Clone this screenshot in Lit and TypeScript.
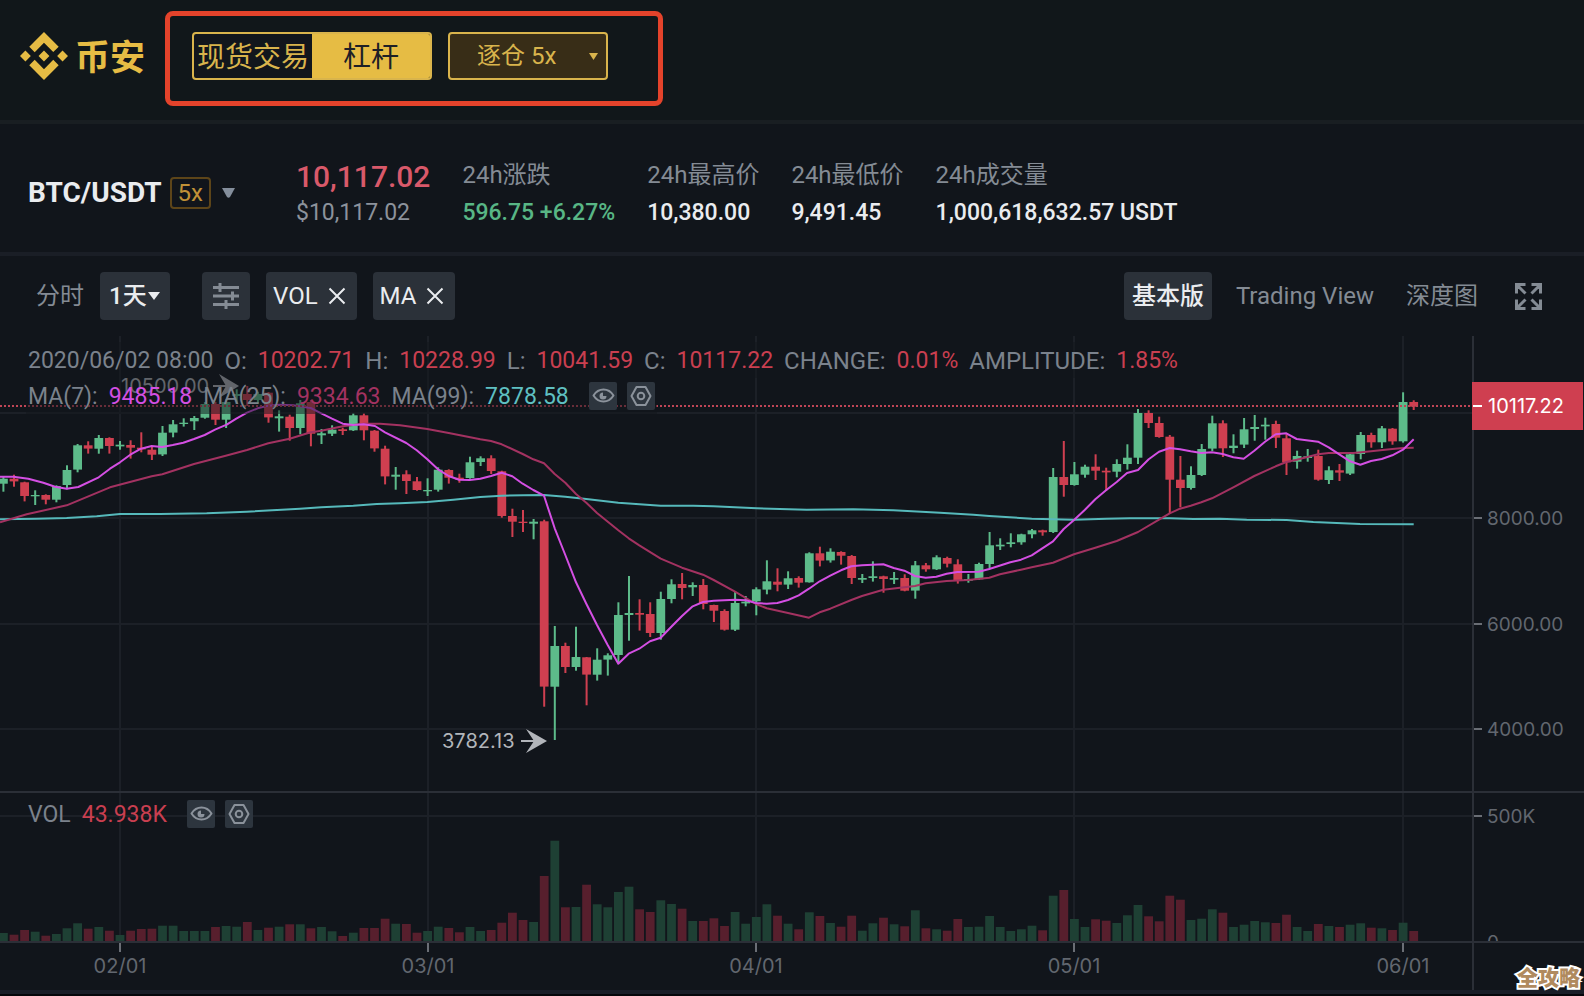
import { LitElement, html, svg, css } from "lit";
import { customElement, property, state } from "lit/decorators.js";
import { classMap } from "lit/directives/class-map.js";

type Candle = [string, number, number, number, number, number];

// Daily candles, 2020-01-21 to 2020-06-02: direction, high, body top,
// body bottom, low and volume, in thirds of a chart unit.
const CANDLES: Candle[] = [
  ["g", 290, 296, 311, 335, 27], ["r", 284, 296, 304, 320, 22], ["r", 305, 307, 348, 364, 36], ["g", 331, 345, 349, 375, 31],
  ["r", 343, 345, 359, 373, 19], ["g", 316, 318, 359, 367, 24], ["g", 256, 270, 315, 328, 41], ["g", 192, 196, 269, 277, 56],
  ["r", 184, 196, 206, 221, 40], ["g", 165, 174, 206, 221, 45], ["r", 172, 174, 198, 221, 34], ["g", 183, 194, 199, 209, 21],
  ["r", 181, 195, 203, 236, 34], ["r", 157, 203, 208, 217, 39], ["r", 201, 209, 224, 240, 40], ["g", 138, 158, 223, 228, 49],
  ["g", 120, 133, 158, 172, 49], ["g", 115, 128, 132, 140, 33], ["g", 108, 114, 124, 150, 33], ["g", 66, 72, 113, 116, 33],
  ["r", 66, 72, 119, 135, 45], ["g", 58, 66, 119, 144, 48], ["g", 28, 42, 48, 72, 46], ["r", 18, 42, 60, 78, 60],
  ["g", 35, 42, 60, 70, 36], ["r", 36, 38, 112, 128, 43], ["g", 91, 109, 115, 155, 46], ["r", 104, 110, 144, 182, 53],
  ["g", 60, 70, 144, 163, 53], ["r", 60, 66, 161, 199, 41], ["g", 147, 160, 166, 192, 45], ["g", 136, 149, 161, 168, 32],
  ["r", 143, 148, 153, 165, 18], ["g", 100, 106, 151, 153, 28], ["r", 100, 106, 151, 181, 42], ["r", 150, 152, 205, 215, 42],
  ["r", 197, 206, 289, 313, 70], ["g", 261, 284, 290, 329, 55], ["r", 271, 283, 303, 342, 54], ["r", 291, 304, 330, 332, 28],
  ["g", 295, 330, 334, 348, 33], ["g", 262, 269, 329, 335, 46], ["r", 268, 270, 293, 311, 42], ["r", 281, 293, 298, 308, 29],
  ["g", 230, 247, 294, 296, 45], ["g", 229, 235, 246, 258, 33], ["r", 226, 235, 273, 282, 36], ["r", 272, 274, 408, 413, 58],
  ["r", 386, 408, 425, 471, 88], ["r", 390, 425, 429, 456, 66], ["g", 417, 425, 431, 478, 60], ["r", 419, 424, 920, 980, 198],
  ["g", 738, 798, 920, 1080, 304], ["r", 788, 798, 861, 879, 104], ["g", 740, 831, 861, 872, 105], ["r", 831, 832, 884, 976, 172],
  ["g", 805, 839, 884, 902, 113], ["g", 820, 826, 839, 887, 104], ["g", 667, 705, 825, 850, 150], ["g", 588, 699, 705, 782, 166],
  ["r", 658, 699, 704, 752, 98], ["r", 667, 702, 759, 771, 90], ["g", 635, 657, 759, 779, 125], ["g", 598, 613, 657, 670, 114],
  ["r", 579, 612, 624, 658, 100], ["g", 607, 615, 622, 648, 63], ["r", 597, 615, 672, 688, 63], ["r", 674, 675, 692, 726, 71],
  ["r", 688, 693, 749, 752, 48], ["g", 635, 669, 749, 753, 90], ["g", 648, 665, 670, 679, 55], ["g", 622, 628, 664, 706, 75],
  ["g", 541, 604, 629, 643, 113], ["r", 565, 605, 614, 634, 79], ["g", 574, 595, 614, 627, 55], ["r", 589, 594, 608, 623, 38],
  ["g", 517, 520, 607, 608, 89], ["r", 500, 520, 542, 559, 78], ["g", 505, 515, 541, 548, 57], ["r", 514, 516, 527, 554, 46],
  ["r", 525, 528, 594, 612, 79], ["g", 582, 594, 599, 609, 34], ["g", 544, 589, 594, 605, 56], ["r", 587, 589, 597, 638, 73],
  ["g", 576, 594, 599, 612, 53], ["r", 583, 594, 632, 634, 47], ["g", 543, 556, 632, 656, 95], ["r", 549, 556, 568, 575, 41],
  ["g", 526, 532, 568, 570, 38], ["r", 530, 534, 551, 562, 34], ["r", 538, 553, 602, 611, 69], ["g", 582, 597, 602, 608, 45],
  ["g", 548, 552, 598, 600, 46], ["g", 456, 496, 552, 567, 78], ["g", 475, 494, 499, 510, 45], ["g", 460, 487, 492, 502, 33],
  ["g", 461, 463, 487, 494, 38], ["g", 447, 451, 463, 475, 49], ["r", 449, 451, 457, 467, 35], ["g", 264, 291, 456, 459, 139],
  ["r", 183, 291, 315, 350, 156], ["g", 246, 283, 315, 317, 69], ["g", 254, 260, 284, 293, 45], ["r", 223, 260, 272, 300, 68],
  ["r", 263, 272, 277, 333, 64], ["g", 238, 252, 275, 292, 57], ["g", 193, 233, 252, 269, 80], ["g", 87, 99, 233, 252, 111],
  ["r", 91, 99, 129, 144, 77], ["r", 110, 129, 171, 173, 62], ["r", 165, 170, 299, 400, 139], ["r", 228, 299, 324, 382, 127],
  ["g", 259, 285, 324, 329, 66], ["g", 192, 207, 285, 288, 70], ["g", 107, 130, 206, 213, 98], ["r", 121, 130, 205, 231, 88],
  ["g", 163, 197, 204, 220, 45], ["g", 114, 148, 194, 204, 52], ["g", 105, 141, 147, 182, 63], ["g", 113, 134, 139, 179, 59],
  ["r", 122, 132, 173, 204, 57], ["r", 163, 175, 247, 285, 82], ["g", 212, 228, 245, 266, 45], ["g", 207, 229, 234, 245, 33],
  ["r", 209, 228, 299, 302, 54], ["g", 259, 271, 300, 312, 48], ["r", 252, 271, 278, 303, 45], ["g", 220, 223, 281, 285, 52],
  ["g", 156, 165, 222, 238, 56], ["r", 158, 165, 187, 203, 43], ["g", 138, 145, 187, 204, 41], ["r", 144, 146, 184, 194, 36],
  ["g", 37, 66, 184, 188, 58], ["r", 61, 66, 80, 90, 33],
];

// Moving averages, flat x,y lists in the same units as the candles.
const MA7 = [
  0,290,40,290,85,296,130,308,165,320,200,326,235,321,296,292,330,266,360,247,391,224,423,206,455,198,487,201,518,195,550,188,
  582,177,614,165,645,149,680,134,709,116,741,98,773,85,800,78,837,74,880,76,932,84,964,100,996,116,1028,131,1060,135,1091,133,
  1125,138,1155,157,1219,189,1250,211,1282,238,1314,268,1346,288,1377,299,1409,300,1441,296,1473,288,1505,278,1537,289,
  1568,311,1600,330,1632,347,1664,445,1696,525,1728,607,1759,671,1791,735,1823,795,1855,851,1886,821,1918,806,1950,784,
  1982,773,2014,740,2046,708,2078,679,2109,666,2141,662,2205,659,2237,661,2268,669,2300,671,2332,669,2364,660,2396,646,
  2427,626,2459,604,2491,587,2523,571,2554,559,2586,556,2650,553,2681,564,2713,572,2745,588,2777,593,2809,590,2840,581,
  2872,576,2936,575,2968,567,3031,547,3063,539,3095,526,3127,505,3159,484,3191,447,3222,420,3254,390,3286,358,3318,331,
  3350,306,3381,279,3414,270,3446,238,3477,215,3509,204,3540,208,3572,214,3604,219,3636,217,3668,222,3700,232,3731,236,
  3763,212,3795,185,3827,163,3859,160,3890,177,3954,185,3986,202,4018,223,4050,244,4081,254,4113,243,4145,237,4177,226,
  4209,209,4241,178,
];
const MA25 = [
  0,427,80,403,200,376,330,322,455,289,487,283,582,252,677,227,741,210,805,190,869,176,932,157,964,152,1028,139,1091,131,
  1140,131,1200,136,1282,147,1346,159,1441,178,1473,183,1505,193,1568,222,1600,238,1632,250,1664,282,1696,308,1728,342,
  1759,368,1791,399,1855,451,1886,475,1918,496,1982,536,2046,563,2109,584,2141,600,2205,635,2268,672,2300,685,2364,699,
  2427,713,2459,697,2491,686,2554,660,2586,648,2650,629,2713,622,2745,618,2777,610,2840,603,2904,600,2968,593,3000,583,
  3063,569,3095,562,3159,548,3222,523,3286,503,3350,483,3414,456,3477,419,3509,400,3540,386,3572,377,3604,367,3636,355,
  3700,322,3763,288,3827,259,3859,246,3890,239,3954,223,3986,219,4060,219,4113,214,4177,207,4209,204,4241,203,
];
const MA99 = [
  0,418,110,416,200,414,290,409,360,402,480,402,620,400,740,395,900,386,964,382,1060,377,1130,372,1200,370,1282,366,1360,359,
  1441,351,1505,347,1570,346,1632,345,1696,350,1759,357,1855,368,1982,377,2080,377,2140,379,2270,385,2420,389,2560,388,
  2680,391,2820,398,2920,404,2968,408,3095,416,3159,418,3222,419,3320,416,3390,415,3510,415,3580,417,3660,416,3740,419,
  3860,420,3940,426,4080,432,4241,433,
];

const STEP = 10.604;
const FIRST_X = 3.4;
const TOP = 44;
const BASE = 606;

const py = (v: number) => TOP + v / 3;
const path = (p: number[]) => {
  const pts: string[] = [];
  for (let i = 0; i < p.length; i += 2) pts.push(`${(p[i] / 3).toFixed(1)},${py(p[i + 1]).toFixed(1)}`);
  return pts.join(" ");
};

const eyeIcon = html`<svg viewBox="0 0 28 28" fill="none" stroke="#8b929b" stroke-width="2" aria-hidden="true">
  <path d="M4.500 13.500C9.500 5.500 19.500 5.500 24.500 13.500C19.500 21.500 9.500 21.500 4.500 13.500Z" stroke-linejoin="round" />
  <path d="M14 10.500A3.500 3.500 0 1 0 17.500 14H14Z" fill="#8b929b" stroke="none" />
</svg>`;

const gearIcon = html`<svg viewBox="0 0 28 28" fill="none" stroke="#8b929b" stroke-width="2" aria-hidden="true">
  <path d="M9.500 5H18.500L23.500 14L18.500 23H9.500L4.500 14Z" stroke-linejoin="round" />
  <circle cx="14" cy="14" r="3.300" />
</svg>`;

const closeIcon = html`<svg class="close" viewBox="0 0 18 18" fill="none" stroke="currentColor" stroke-width="2" aria-hidden="true">
  <path d="M1.500 1.500L16.500 16.500M16.500 1.500L1.500 16.500" />
</svg>`;

@customElement("price-chart")
export class PriceChart extends LitElement {
  static styles = css`
    :host { display: block; }
    svg { display: block; width: 100%; height: auto; }
    text { font-family: Inter, "Liberation Sans", sans-serif; font-size: 20px; fill: #62676f; }
    .grid { stroke: #1c2027; stroke-width: 2; }
    .frame { stroke: #2b2f37; stroke-width: 2; }
    .tick { stroke: #6a6e75; stroke-width: 2; }
    .g { fill: #5dbb8a; }
    .r { fill: #cf3f50; }
    .vg { fill: #1e4034; }
    .vr { fill: #571f2d; }
    .ma { fill: none; stroke-width: 2; stroke-linejoin: round; }
    .ma7 { stroke: #d44fe3; }
    .ma25 { stroke: #a33261; }
    .ma99 { stroke: #56b9bb; }
    .last { stroke: #c04556; stroke-width: 2; stroke-dasharray: 2 2; }
    .tag { fill: #cf3f50; }
    .axis { font-size: 19px; }
    .tag-text { fill: #fff; }
    .note { fill: #b2b5ba; }
    .note-line { stroke: #b2b5ba; stroke-width: 2; }
    .middle { text-anchor: middle; }
  `;

  render() {
    const days: [number, string][] = [[11, "02/01"], [40, "03/01"], [71, "04/01"], [101, "05/01"], [132, "06/01"]];
    const prices: [number, string][] = [[182, "8000.00"], [288, "6000.00"], [393, "4000.00"], [480, "500K"]];
    const cx = (i: number) => FIRST_X + i * STEP;
    return html`<svg viewBox="0 0 1584 654" role="img" aria-label="BTC/USDT">
      <defs><clipPath id="plot"><rect x="0" y="0" width="1584" height="605" /></clipPath></defs>
      ${[77, 182, 288, 393, 480].map((y) => svg`<line class="grid" x1="0" x2="1472" y1=${y} y2=${y} />`)}
      ${days.map(([i]) => svg`<line class="grid" x1=${Math.round(cx(i))} x2=${Math.round(cx(i))} y1="0" y2=${BASE} />`)}
      ${CANDLES.map(([c, , , , , v], i) => svg`<rect class=${"v" + c} x=${(cx(i) - 4.4).toFixed(1)} y=${(BASE - v / 3).toFixed(1)} width="8.800" height=${(v / 3).toFixed(1)} />`)}
      ${CANDLES.map(([c, hi, top, bot, lo], i) => svg`
        <rect class=${c} x=${(cx(i) - 1).toFixed(1)} y=${py(hi).toFixed(1)} width="2" height=${((lo - hi) / 3).toFixed(1)} />
        <rect class=${c} x=${(cx(i) - 4.4).toFixed(1)} y=${py(top).toFixed(1)} width="8.800" height=${((bot - top) / 3).toFixed(1)} />`)}
      <polyline class="ma ma99" points=${path(MA99)} />
      <polyline class="ma ma25" points=${path(MA25)} />
      <polyline class="ma ma7" points=${path(MA7)} />
      <line class="last" x1="0" x2="1472" y1="70" y2="70" />

      <text class="note" x="121" y="57">10500.00</text>
      <line class="note-line" x1="213" x2="230" y1="50" y2="50" />
      <path class="note" d="M219 38L239 50L219 62L226 50Z" />
      <text class="note" x="442" y="412">3782.13</text>
      <line class="note-line" x1="521" x2="534" y1="405" y2="405" />
      <path class="note" d="M526 393L547 405L526 417L534 405Z" />

      <line class="frame" x1="0" x2="1584" y1="456" y2="456" />
      <line class="frame" x1="0" x2="1584" y1=${BASE} y2=${BASE} />
      <line class="frame" x1="1473" x2="1473" y1="0" y2="654" />

      ${days.map(([i, label]) => svg`
        <line class="tick" x1=${Math.round(cx(i))} x2=${Math.round(cx(i))} y1="607" y2="616" />
        <text class="middle" x=${Math.round(cx(i))} y="637">${label}</text>`)}
      ${prices.map(([y, label]) => svg`
        <line class="tick" x1="1474" x2="1482" y1=${y} y2=${y} />
        <text class="axis" x="1487" y=${y + 7}>${label}</text>`)}
      <text class="axis" x="1487" y="613" clip-path="url(#plot)">0</text>

      <rect class="tag" x="1472" y="46" width="111" height="48" />
      <line x1="1473" x2="1482" y1="70" y2="70" stroke="#fff" stroke-width="2" />
      <text class="tag-text" x="1488" y="77">10117.22</text>
    </svg>`;
  }
}

@customElement("indicator-tools")
export class IndicatorTools extends LitElement {
  @property() name = "";

  static styles = css`
    :host { display: flex; gap: 10px; }
    button { width: 28px; height: 28px; padding: 0; border: 0; border-radius: 2px; background: #2d353e; cursor: pointer; }
    svg { display: block; width: 28px; height: 28px; }
  `;

  render() {
    return html`
      <button type="button" aria-label="${this.name} 显示">${eyeIcon}</button>
      <button type="button" aria-label="${this.name} 设置">${gearIcon}</button>
    `;
  }
}

@customElement("app-root")
export class AppRoot extends LitElement {
  @state() private mode = "杠杆";
  @state() private view = "基本版";

  static styles = css`
    :host {
      display: block;
      min-height: 100vh;
      overflow: hidden;
      background: #05060a;
      color: #eaecef;
      font-family: Roboto, "Noto Sans CJK SC", sans-serif;
      font-size: 23px;
      line-height: 32px;
    }
    * { box-sizing: border-box; }
    button, select { font: inherit; color: inherit; background: none; border: 0; padding: 0; margin: 0; cursor: pointer; }
    select { appearance: none; }

    .header { display: flex; align-items: flex-start; gap: 20px; padding: 11px 20px 14px; background: #11171a; border-bottom: 4px solid #191e22; }
    .logo { display: flex; align-items: center; gap: 7px; height: 90px; color: #e6bc44; text-decoration: none; font-size: 35px; font-weight: 700; }
    .logo svg { width: 48px; height: 48px; }
    .logo span { padding-top: 6px; }
    .highlight { display: flex; gap: 16px; padding: 16px 50px 21px 22px; border: 5px solid #e4432b; border-radius: 8px; }
    .toggle { display: flex; border: 2px solid #d9b44c; border-radius: 4px; overflow: hidden; background: #12161c; font-size: 28px; }
    .toggle button { width: 118px; height: 44px; padding-top: 4px; color: #d9b44c; white-space: nowrap; }
    .toggle .on { background: #e6bc44; color: #1e2026; }
    .select { position: relative; display: flex; }
    .select svg { position: absolute; pointer-events: none; }
    .margin select { width: 160px; height: 48px; padding-left: 27px; border: 2px solid #d9b44c; border-radius: 4px; background: #382d17; color: #d9b44c; font-size: 24px; }
    .margin svg { right: 10px; top: 21px; width: 9px; height: 7px; }

    .ticker { display: flex; align-items: center; padding: 35px 28px 23px; background: #11151b; border-bottom: 4px solid #1a1e26; }
    .pair { display: flex; align-items: center; gap: 8px; width: 268px; padding-bottom: 3px; font-size: 28px; font-weight: 700; }
    .pair h1 { margin: 0; font: inherit; }
    .lever { height: 32px; padding: 0 6px; border: 2px solid #5d4519; border-radius: 4px; color: #c09137; font-size: 24px; line-height: 28px; font-weight: 400; }
    .pair svg { width: 13px; height: 10px; margin-left: 3px; }
    .stats { display: flex; gap: 32px; margin: 0; white-space: nowrap; }
    .stat { display: flex; flex-direction: column; gap: 6px; }
    .stat dt { color: #848b94; font-size: 24px; }
    .stat dd { margin: 0; font-weight: 500; }
    .price dt { color: #d9596a; font-size: 30px; font-weight: 500; line-height: 36px; }
    .price dd { color: #8c929b; font-weight: 400; line-height: 24px; }
    .stat .up { color: #58b685; }

    .toolbar { display: flex; align-items: center; padding: 16px 42px 16px 36px; background: #11151b; font-size: 24px; }
    .toolbar button { display: flex; align-items: center; justify-content: center; height: 48px; white-space: nowrap; }
    .muted { color: #848b94; }
    .chip { border-radius: 4px; background: #2b3139; }
    .interval { margin: 0 32px 0 16px; }
    .interval select { width: 70px; height: 48px; padding-left: 9px; font-size: 24px; font-weight: 500; }
    .interval svg { right: 10px; top: 20px; width: 12px; height: 8px; }
    .tools { display: flex; gap: 16px; }
    .tools .settings { width: 48px; }
    .tools .tag { gap: 10px; padding: 0 11px 0 7px; }
    .close { width: 18px; height: 18px; }
    .views { display: flex; align-items: center; gap: 16px; margin-left: auto; }
    .views button { padding: 0 8px; color: #848b94; }
    .views .on { border-radius: 4px; background: #2b3139; color: #eaecef; font-weight: 500; }
    .views .full { margin-left: 13px; padding: 0; }
    .full svg { width: 27px; height: 27px; }

    .chart { position: relative; background: #11151b; border-bottom: 4px solid #191d27; }
    .legend { position: absolute; left: 26px; top: 6px; color: #7b828c; white-space: nowrap; }
    .row { display: flex; align-items: center; width: fit-content; height: 36px; padding: 0 2px; gap: 11px; background: rgba(17, 21, 27, 0.5); }
    .row span { padding-top: 2px; }
    .row .key { font-size: 24px; }
    .row indicator-tools { margin-left: 9px; }
    .volume { top: 460px; }
    .volume .row { background: none; }
    .down { color: #c93f50; }
    .c7 { color: #d44fe3; }
    .c25 { color: #a33261; }
    .c99 { color: #5fc0c2; }
    .watermark { position: absolute; right: 4px; bottom: -2px; font-family: "Noto Sans CJK SC", sans-serif; font-size: 21px; font-weight: 900; color: #b08a5e; -webkit-text-stroke: 4px #fff; paint-order: stroke fill; }
  `;

  render() {
    const stats = [
      ["24h涨跌", "596.75 +6.27%", "up"],
      ["24h最高价", "10,380.00", ""],
      ["24h最低价", "9,491.45", ""],
      ["24h成交量", "1,000,618,632.57 USDT", ""],
    ];
    const ohlc = [
      ["O:", "10202.71"], ["H:", "10228.99"], ["L:", "10041.59"],
      ["C:", "10117.22"], ["CHANGE:", "0.01%"], ["AMPLITUDE:", "1.85%"],
    ];
    return html`
      <header class="header">
        <a class="logo" href="#">
          <svg viewBox="0 0 24 24" fill="currentColor" aria-hidden="true">
            <path d="M16.624 13.9202l2.7175 2.7154-7.353 7.353-7.353-7.352 2.7175-2.7164 4.6355 4.6595 4.6356-4.6595zm4.6366-4.6366L24 12l-2.7154 2.7164L18.5682 12l2.6924-2.7164zm-9.272.001l2.7163 2.6914-2.7164 2.7174v-.001L9.2721 12l2.7164-2.7154zm-9.2722-.001L5.4088 12l-2.6914 2.6924L0 12l2.7164-2.7164zM11.9885.0115l7.353 7.329-2.7174 2.7154-4.6356-4.6356-4.6355 4.6595-2.7174-2.7154 7.353-7.353z" />
          </svg>
          <span>币安</span>
        </a>
        <div class="highlight">
          <div class="toggle">
            ${["现货交易", "杠杆"].map((m) => html`
              <button type="button" class=${classMap({ on: this.mode === m })} @click=${() => (this.mode = m)}>${m}</button>`)}
          </div>
          <div class="select margin">
            <select aria-label="杠杆倍数"><option>逐仓 5x</option></select>
            <svg viewBox="0 0 9 7" fill="#d9b44c" aria-hidden="true"><path d="M0 0H9L4.500 7Z" /></svg>
          </div>
        </div>
      </header>

      <section class="ticker">
        <button type="button" class="pair">
          <h1>BTC/USDT</h1>
          <span class="lever">5x</span>
          <svg viewBox="0 0 13 10" fill="#848e9c" aria-hidden="true"><path d="M0 0H13L8 9Q6.500 10.500 5 9Z" /></svg>
        </button>
        <dl class="stats">
          <div class="stat price"><dt>10,117.02</dt><dd>$10,117.02</dd></div>
          ${stats.map(([k, v, c]) => html`<div class="stat"><dt>${k}</dt><dd class=${c}>${v}</dd></div>`)}
        </dl>
      </section>

      <nav class="toolbar">
        <button type="button" class="muted">分时</button>
        <div class="select chip interval">
          <select aria-label="周期"><option>1天</option></select>
          <svg viewBox="0 0 12 8" fill="#eaecef" aria-hidden="true"><path d="M0 0H12L6 8Z" /></svg>
        </div>
        <div class="tools">
          <button type="button" class="chip settings" aria-label="指标">
            <svg width="28" height="28" viewBox="0 0 28 28" fill="none" stroke="#848b94" stroke-width="3" aria-hidden="true">
              <path d="M1 5.500H27M1 14H27M1 22.500H27" />
              <path d="M8 1V10M20.500 9.500V18.500M14 18V27" />
            </svg>
          </button>
          <button type="button" class="chip tag">VOL ${closeIcon}</button>
          <button type="button" class="chip tag">MA ${closeIcon}</button>
        </div>
        <div class="views">
          ${["基本版", "Trading View", "深度图"].map((v) => html`
            <button type="button" class=${classMap({ on: this.view === v })} @click=${() => (this.view = v)}>${v}</button>`)}
          <button type="button" class="full" aria-label="全屏">
            <svg viewBox="0 0 27 27" fill="none" stroke="currentColor" stroke-width="3" aria-hidden="true">
              <path d="M1.500 10.500V1.500H10.500M1.500 1.500L10.500 10.500M16.500 1.500H25.500V10.500M25.500 1.500L16.500 10.500M1.500 16.500V25.500H10.500M1.500 25.500L10.500 16.500M25.500 16.500V25.500H16.500M25.500 25.500L16.500 16.500" />
            </svg>
          </button>
        </div>
      </nav>

      <main class="chart">
        <price-chart></price-chart>
        <div class="legend">
          <div class="row">
            <span>2020/06/02 08:00</span>
            ${ohlc.map(([k, v]) => html`<span class="key">${k}</span><span class="down">${v}</span>`)}
          </div>
          <div class="row">
            <span>MA(7):</span><span class="c7">9485.18</span>
            <span>MA(25):</span><span class="c25">9334.63</span>
            <span>MA(99):</span><span class="c99">7878.58</span>
            <indicator-tools name="MA"></indicator-tools>
          </div>
        </div>
        <div class="legend volume">
          <div class="row">
            <span>VOL</span><span class="down">43.938K</span>
            <indicator-tools name="VOL"></indicator-tools>
          </div>
        </div>
        <span class="watermark">全攻略</span>
      </main>
    `;
  }
}
